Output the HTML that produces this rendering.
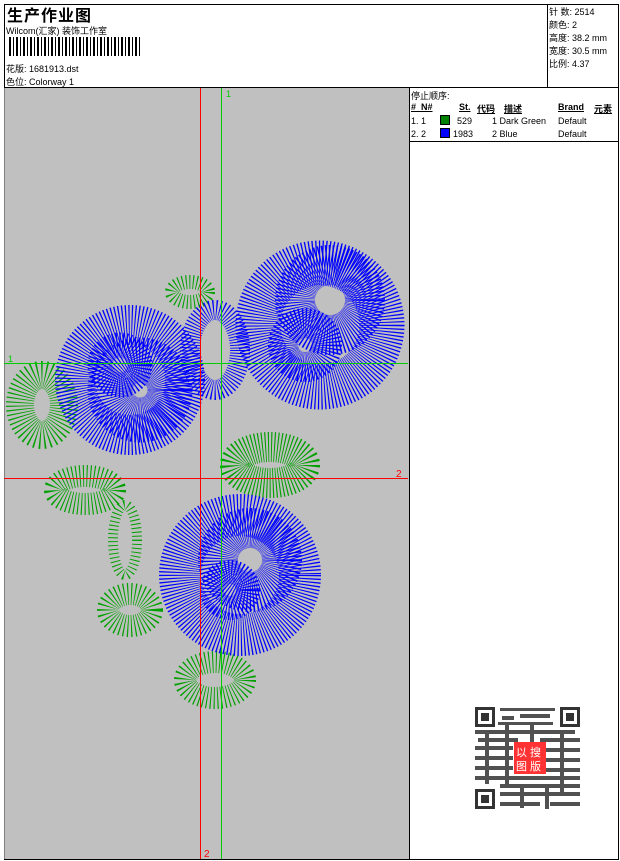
<!DOCTYPE html>
<html><head><meta charset="utf-8"><style>
*{margin:0;padding:0;box-sizing:border-box}
body{width:620px;height:861px;background:#fff;position:relative;overflow:hidden;font-family:"Liberation Sans","Noto Sans CJK SC",sans-serif;font-size:9px;color:#000}
.a{position:absolute}
</style></head><body>
<div class="a" style="left:4px;top:4px;width:615px;height:856px;border:1px solid #000"></div>
<div class="a" style="left:547px;top:4px;width:1px;height:84px;background:#000"></div>
<div class="a" style="left:4px;top:87px;width:615px;height:1px;background:#000"></div>
<div class="a" style="left:7px;top:2px;font-size:16px;font-weight:bold;letter-spacing:1px">生产作业图</div>
<div class="a" style="left:6px;top:24px">Wilcom(汇家) 装饰工作室</div>
<div class="a" style="left:9px;top:37px;width:131px;height:19px;background:repeating-linear-gradient(90deg,#000 0 2px,#fff 2px 4px,#000 4px 5px,#fff 5px 7px)"></div>
<div class="a" style="left:6px;top:62px">花版: 1681913.dst</div>
<div class="a" style="left:6px;top:75px">色位: Colorway 1</div>
<div class="a" style="left:549px;top:6px;line-height:13px">针 数: 2514<br>颜色: 2<br>高度: 38.2 mm<br>宽度: 30.5 mm<br>比例: 4.37</div>
<div class="a" style="left:4px;top:88px;width:405px;height:771px;background:#c0c0c0;border-left:1px solid #808080"></div>
<div class="a" style="left:409px;top:88px;width:1px;height:772px;background:#000"></div>
<div class="a" style="left:410px;top:141px;width:209px;height:1px;background:#000"></div>
<div class="a" style="left:411px;top:89px">停止顺序:</div>
<div class="a" style="left:411px;top:102px;font-weight:bold;text-decoration:underline;white-space:pre">#  N#</div>
<div class="a" style="left:459px;top:102px;font-weight:bold;text-decoration:underline">St.</div>
<div class="a" style="left:477px;top:102px;font-weight:bold;text-decoration:underline">代码</div>
<div class="a" style="left:504px;top:102px;font-weight:bold;text-decoration:underline">描述</div>
<div class="a" style="left:558px;top:102px;font-weight:bold;text-decoration:underline">Brand</div>
<div class="a" style="left:594px;top:102px;font-weight:bold;text-decoration:underline">元素</div>
<div class="a" style="left:411px;top:116px">1. 1</div>
<div class="a" style="left:440px;top:115px;width:10px;height:10px;background:#008000;border:1px solid #000"></div>
<div class="a" style="left:457px;top:116px">529</div>
<div class="a" style="left:492px;top:116px">1 Dark Green</div>
<div class="a" style="left:558px;top:116px">Default</div>
<div class="a" style="left:411px;top:129px">2. 2</div>
<div class="a" style="left:440px;top:128px;width:10px;height:10px;background:#0000ff;border:1px solid #000"></div>
<div class="a" style="left:453px;top:129px">1983</div>
<div class="a" style="left:492px;top:129px">2 Blue</div>
<div class="a" style="left:558px;top:129px">Default</div>

<svg class="a" style="left:0;top:0" width="410" height="861" viewBox="0 0 410 861">
<g fill="none" stroke="#00a000">
<ellipse cx="42" cy="405" rx="22" ry="30" stroke-width="28" stroke-dasharray="1 2.5"/>
<ellipse cx="85" cy="490" rx="30" ry="14" stroke-width="22" stroke-dasharray="1 2.5"/>
<ellipse cx="270" cy="465" rx="35" ry="18" stroke-width="30" stroke-dasharray="1 2"/>
<ellipse cx="130" cy="610" rx="22" ry="16" stroke-width="22" stroke-dasharray="1 2.5"/>
<ellipse cx="215" cy="680" rx="30" ry="18" stroke-width="22" stroke-dasharray="1 2.5"/>
<ellipse cx="190" cy="292" rx="18" ry="10" stroke-width="14" stroke-dasharray="1 2.5"/>
<ellipse cx="125" cy="540" rx="12" ry="35" stroke-width="10" stroke-dasharray="1 3"/>
</g>
<g fill="none" stroke="#0000ff">
<circle cx="130" cy="380" r="55" stroke-width="40" stroke-dasharray="1 1.8"/>
<circle cx="140" cy="390" r="30" stroke-width="45" stroke-dasharray="1 1.6"/>
<circle cx="120" cy="365" r="20" stroke-width="25" stroke-dasharray="1 1.6"/>
<circle cx="320" cy="325" r="62" stroke-width="45" stroke-dasharray="1 1.8"/>
<circle cx="330" cy="300" r="35" stroke-width="40" stroke-dasharray="1 1.6"/>
<circle cx="305" cy="345" r="22" stroke-width="30" stroke-dasharray="1 1.6"/>
<circle cx="240" cy="575" r="60" stroke-width="42" stroke-dasharray="1 1.8"/>
<circle cx="250" cy="560" r="32" stroke-width="40" stroke-dasharray="1 1.6"/>
<circle cx="230" cy="590" r="18" stroke-width="24" stroke-dasharray="1 1.6"/>
<ellipse cx="215" cy="350" rx="25" ry="40" stroke-width="20" stroke-dasharray="1 2"/>
</g>
<line x1="200.5" y1="88" x2="200.5" y2="859" stroke="#f00"/>
<line x1="221.5" y1="88" x2="221.5" y2="859" stroke="#0c0"/>
<line x1="4" y1="363.5" x2="408" y2="363.5" stroke="#0c0"/>
<line x1="4" y1="478.5" x2="408" y2="478.5" stroke="#f00"/>
<text x="226" y="97" fill="#0c0" font-size="9" font-family="Liberation Sans">1</text>
<text x="8" y="362" fill="#0c0" font-size="9" font-family="Liberation Sans">1</text>
<text x="396" y="477" fill="#f00" font-size="10" font-family="Liberation Sans">2</text>
<text x="204" y="857" fill="#f00" font-size="10" font-family="Liberation Sans">2</text>
</svg>

<svg class="a" style="left:470px;top:704px" width="120" height="112" viewBox="0 0 120 112">
<rect width="120" height="112" fill="#fff"/>
<g fill="#333">
<rect x="5" y="3" width="20" height="20"/><rect x="8" y="6" width="14" height="14" fill="#fff"/><rect x="11" y="9" width="8" height="8"/>
<rect x="90" y="3" width="20" height="20"/><rect x="93" y="6" width="14" height="14" fill="#fff"/><rect x="96" y="9" width="8" height="8"/>
<rect x="5" y="85" width="20" height="20"/><rect x="8" y="88" width="14" height="14" fill="#fff"/><rect x="11" y="91" width="8" height="8"/>
</g>
<g fill="#333" opacity="0.85">
<rect x="30" y="4" width="55" height="3"/><rect x="32" y="12" width="12" height="4"/><rect x="50" y="10" width="30" height="4"/>
<rect x="28" y="18" width="55" height="3"/>
<rect x="5" y="26" width="100" height="4"/><rect x="8" y="34" width="40" height="4"/><rect x="70" y="34" width="40" height="4"/>
<rect x="5" y="42" width="38" height="4"/><rect x="76" y="44" width="34" height="4"/><rect x="5" y="52" width="38" height="4"/>
<rect x="76" y="54" width="34" height="4"/><rect x="5" y="62" width="38" height="4"/><rect x="76" y="64" width="34" height="4"/>
<rect x="5" y="72" width="105" height="4"/><rect x="30" y="80" width="80" height="4"/><rect x="30" y="88" width="80" height="4"/>
<rect x="30" y="98" width="40" height="4"/><rect x="80" y="98" width="30" height="4"/><rect x="35" y="20" width="4" height="60"/><rect x="60" y="18" width="4" height="30"/><rect x="90" y="28" width="4" height="60"/><rect x="15" y="30" width="4" height="50"/><rect x="75" y="80" width="4" height="25"/><rect x="50" y="84" width="4" height="20"/>
</g>
<rect x="44" y="38" width="32" height="32" fill="#f33"/>
<text x="46" y="52" fill="#fff" font-size="11" font-family="Noto Sans CJK SC,sans-serif">以</text>
<text x="60" y="52" fill="#fff" font-size="11" font-family="Noto Sans CJK SC,sans-serif">搜</text>
<text x="46" y="66" fill="#fff" font-size="11" font-family="Noto Sans CJK SC,sans-serif">图</text>
<text x="60" y="66" fill="#fff" font-size="11" font-family="Noto Sans CJK SC,sans-serif">版</text>
</svg>
</body></html>
